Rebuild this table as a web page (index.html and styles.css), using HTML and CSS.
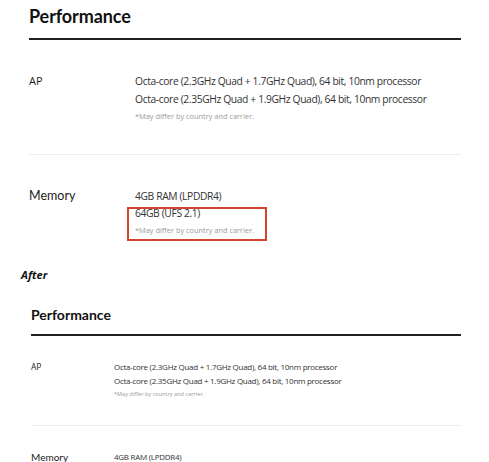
FILE: index.html
```html
<!DOCTYPE html>
<html lang="en">
<head>
<meta charset="utf-8">
<title>Performance specs</title>
<link rel="stylesheet" href="styles.css">
</head>
<body>
<section class="spec spec-before">
  <h2 class="spec-title">Performance</h2>
  <div class="spec-row">
    <div class="spec-label">AP</div>
    <div class="spec-values">
      <div class="spec-line">Octa-core (2.3GHz Quad + 1.7GHz Quad), 64 bit, 10nm processor</div>
      <div class="spec-line">Octa-core (2.35GHz Quad + 1.9GHz Quad), 64 bit, 10nm processor</div>
      <div class="spec-note">*May differ by country and carrier.</div>
    </div>
  </div>
  <div class="spec-row spec-row-last">
    <div class="spec-label spec-label-geo">Memory</div>
    <div class="spec-values">
      <div class="spec-line">4GB RAM (LPDDR4)</div>
      <div class="highlight">
        <div class="spec-line hl-line">64GB (UFS 2.1)</div>
        <div class="spec-note hl-note">*May differ by country and carrier.</div>
      </div>
    </div>
  </div>
</section>

<div class="caption">After</div>

<section class="spec spec-after">
  <h2 class="spec-title">Performance</h2>
  <div class="spec-row">
    <div class="spec-label">AP</div>
    <div class="spec-values">
      <div class="spec-line">Octa-core (2.3GHz Quad + 1.7GHz Quad), 64 bit, 10nm processor</div>
      <div class="spec-line">Octa-core (2.35GHz Quad + 1.9GHz Quad), 64 bit, 10nm processor</div>
      <div class="spec-note">*May differ by country and carrier.</div>
    </div>
  </div>
  <div class="spec-row spec-row-last">
    <div class="spec-label spec-label-geo">Memory</div>
    <div class="spec-values">
      <div class="spec-line">4GB RAM (LPDDR4)</div>
    </div>
  </div>
</section>
</body>
</html>
```

FILE: styles.css
```css
* { box-sizing: border-box; }
html, body { margin: 0; padding: 0; background: #fff; }
body {
  width: 489px;
  height: 462px;
  overflow: hidden;
  font-family: "Open Sans", "Noto Sans", sans-serif;
  color: #333;
}

.spec-title {
  margin: 0;
  font-family: "Lato", "Roboto", sans-serif;
  font-weight: 700;
  color: #111;
}

.spec-row {
  display: flex;
  border-bottom: 1px solid #ececec;
}
.spec-row-last { border-bottom: none; }

.spec-label {
  flex: none;
  color: #222;
}
.spec-label-geo { font-family: "Lato", "Roboto", sans-serif; }

.spec-values { flex: 1; }
.spec-note { color: #9a9a9a; }

/* ---------- Before (large) ---------- */
.spec-before {
  margin: 0 28px 0 29px;
  padding-top: 4px;
}
.spec-before .spec-title {
  font-size: 18px;
  line-height: 24px;
  letter-spacing: -0.1px;
  padding-bottom: 10px;
  border-bottom: 2px solid #222;
}
.spec-before .spec-row { padding: 32px 0 32px; }
.spec-before .spec-row-last { padding-bottom: 0; }
.spec-before .spec-label {
  width: 106px;
  font-size: 11px;
  line-height: 18px;
}
.spec-before .spec-label-geo { font-size: 12.5px; }
.spec-before .spec-line {
  font-size: 10.3px;
  line-height: 18px;
  letter-spacing: -0.38px;
}
.spec-before .spec-note {
  margin-top: 2px;
  font-size: 7.4px;
  line-height: 12px;
}

.highlight {
  margin: 2px 0 0 -8px;
  width: 140px;
  padding: 0 5px 3px 6px;
  border: 2px solid #d8432c;
}
.spec-before .hl-line { line-height: 8px; }
.spec-before .hl-note { margin-top: 7px; }

/* ---------- Caption ---------- */
.caption {
  margin-top: 27px;
  padding-left: 21px;
  font-family: "Open Sans", sans-serif;
  font-weight: 700;
  font-style: italic;
  font-size: 11px;
  line-height: 14px;
  color: #111;
}

/* ---------- After (small) ---------- */
.spec-after {
  margin: 24px 28px 0 31px;
}
.spec-after .spec-title {
  font-size: 14px;
  line-height: 18px;
  padding-bottom: 10px;
  border-bottom: 2px solid #222;
}
.spec-after .spec-row { padding: 24px 0 26px; }
.spec-after .spec-row-last { padding-bottom: 0; }
.spec-after .spec-label {
  width: 83px;
  font-size: 8.5px;
  line-height: 14px;
}
.spec-after .spec-label-geo { font-size: 10px; }
.spec-after .spec-line {
  font-size: 8px;
  line-height: 14px;
  letter-spacing: -0.28px;
}
.spec-after .spec-note {
  margin-top: 1px;
  font-size: 5.6px;
  line-height: 10px;
}
```
